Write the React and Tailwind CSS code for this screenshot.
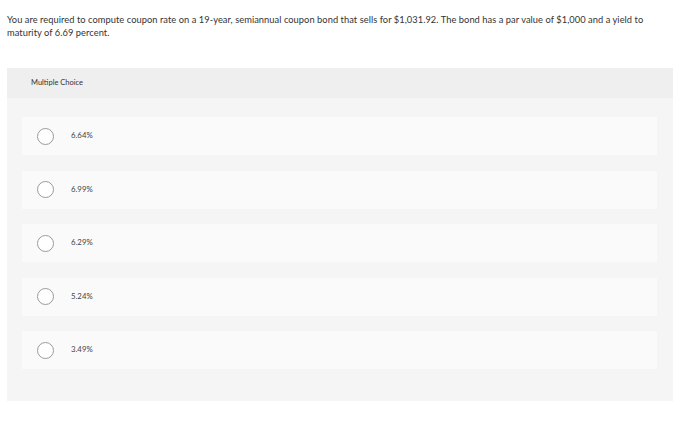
import React from 'react';

const options = ['6.64%', '6.99%', '6.29%', '5.24%', '3.49%'];

export default function App() {
    return (
        <div className="w-[700px] h-[430px] bg-white text-[#333] font-['Lato','Liberation_Sans',sans-serif]">
            <div className="pl-[7px] pr-[40px] pt-[13px] text-[9.3px] leading-[13px] tracking-[0.05px]">
                You are required to compute coupon rate on a 19-year, semiannual coupon bond that sells for $1,031.92. The bond has a par value of $1,000 and a yield to maturity of 6.69 percent.
            </div>

            <div className="mt-[29px] ml-[7px] w-[666px] h-[333px] bg-[#f5f5f5]">
                {/* Header */}
                <div className="h-[30px] bg-[#efefef] pl-[24px] flex items-center text-[7.5px] text-[#333]">
                    Multiple Choice
                </div>

                <div className="pt-[19px] pl-[15px] pr-[16px] flex flex-col gap-[15.5px]">
                    {options.map((o) => (
                        <div key={o} className="h-[38px] bg-[#fafafa] flex items-center pl-[15px]">
                            <div className="w-[17px] h-[17px] rounded-full border border-[#9a9a9a] bg-white" />
                            <span className="ml-[17px] text-[7.8px] text-[#444]">{o}</span>
                        </div>
                    ))}
                </div>
            </div>
        </div>
    );
}
